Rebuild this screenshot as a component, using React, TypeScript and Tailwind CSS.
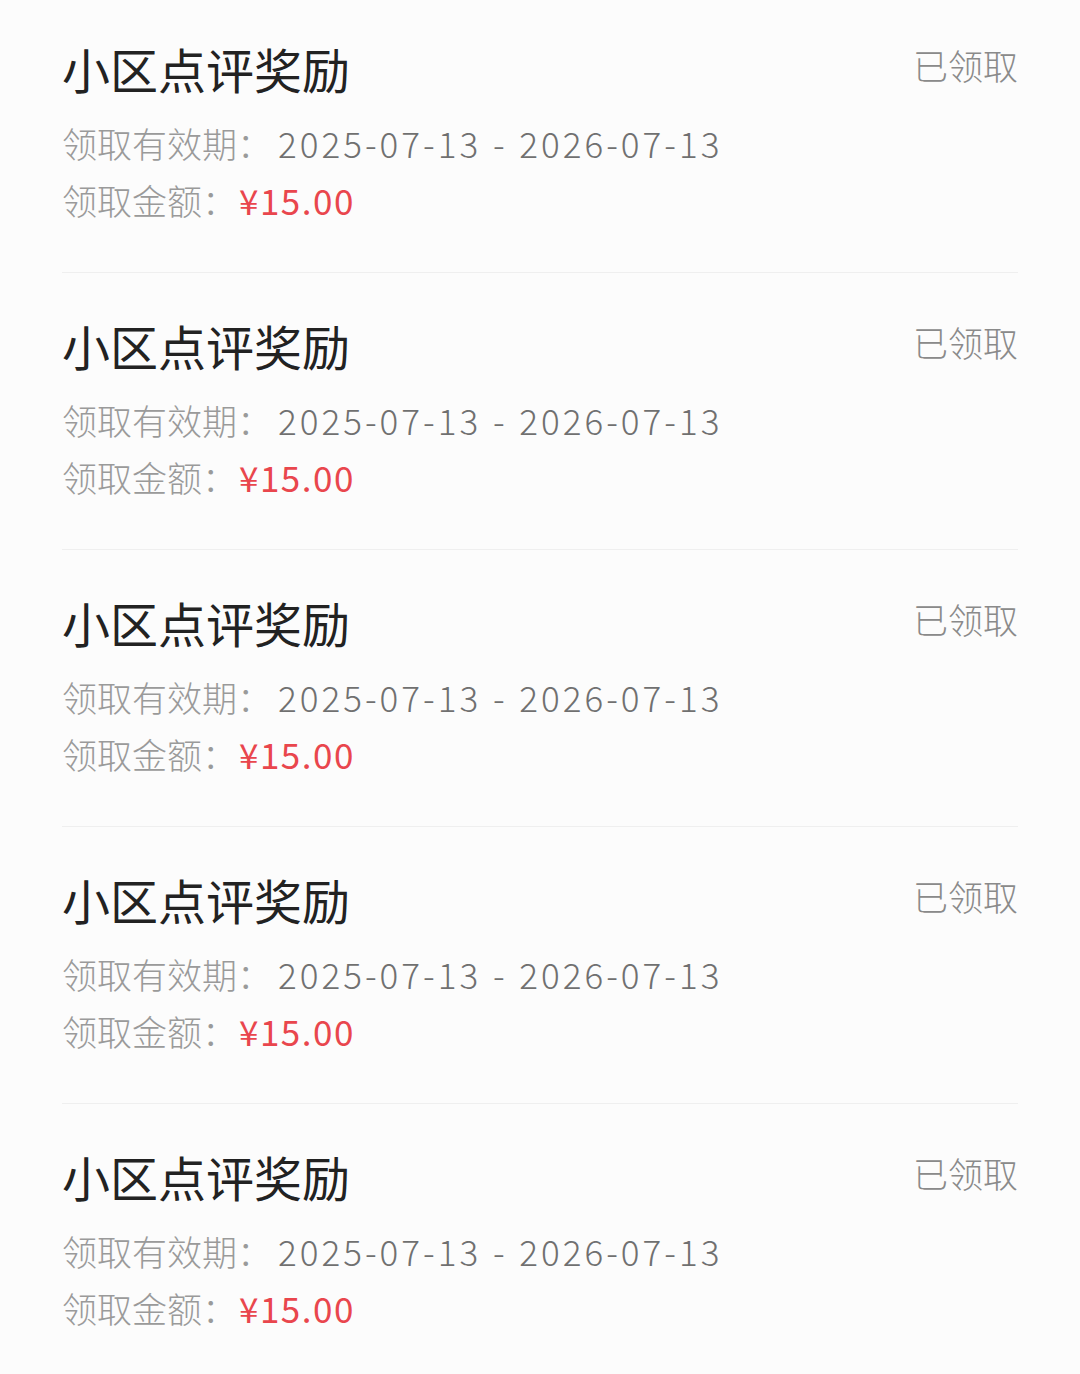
const items = Array.from({ length: 5 }, () => ({
  title: "小区点评奖励",
  status: "已领取",
  start: "2025-07-13",
  end: "2026-07-13",
  amount: "¥15.00",
}));

type Reward = (typeof items)[number];

export default function App() {
  return (
    <div
      className="min-h-[1374px] w-[1080px] bg-[#fcfcfc] px-[62px]"
      style={{ fontFamily: '"Noto Sans CJK SC", "Noto Sans", sans-serif' }}
    >
      {items.map((r, i) => (
        <RewardRow key={i} reward={r} first={i === 0} last={i === items.length - 1} />
      ))}
    </div>
  );
}

function RewardRow({ reward, first, last }: { reward: Reward; first: boolean; last: boolean }) {
  return (
    <section
      className={`${first ? "pt-[40px]" : "pt-[44px]"} pb-[44px] ${
        last ? "" : "border-b border-[#efefef]"
      }`}
    >
      <div className="flex items-start justify-between">
        <h3 className="h-[56px] text-[48px] leading-[56px] font-normal text-[#222222]">
          {reward.title}
        </h3>
        <span className="mt-[-3px] text-[35px] leading-[56px] font-light text-[#8a8a8a]">
          {reward.status}
        </span>
      </div>
      <div className="mt-[18px] flex h-[57px] items-center text-[35px] leading-[57px]">
        <span className="font-light text-[#9a9a9a]">领取有效期：</span>
        <span className="ml-[6px] font-light tracking-[3px] text-[#707070]">
          {reward.start}
          <span className="mx-[1px]"> - </span>
          {reward.end}
        </span>
      </div>
      <div className="flex h-[57px] items-center text-[35px] leading-[57px]">
        <span className="font-light text-[#9a9a9a]">领取金额：</span>
        <span className="ml-[2px] tracking-[1.5px] text-[#e9464d]">{reward.amount}</span>
      </div>
    </section>
  );
}
